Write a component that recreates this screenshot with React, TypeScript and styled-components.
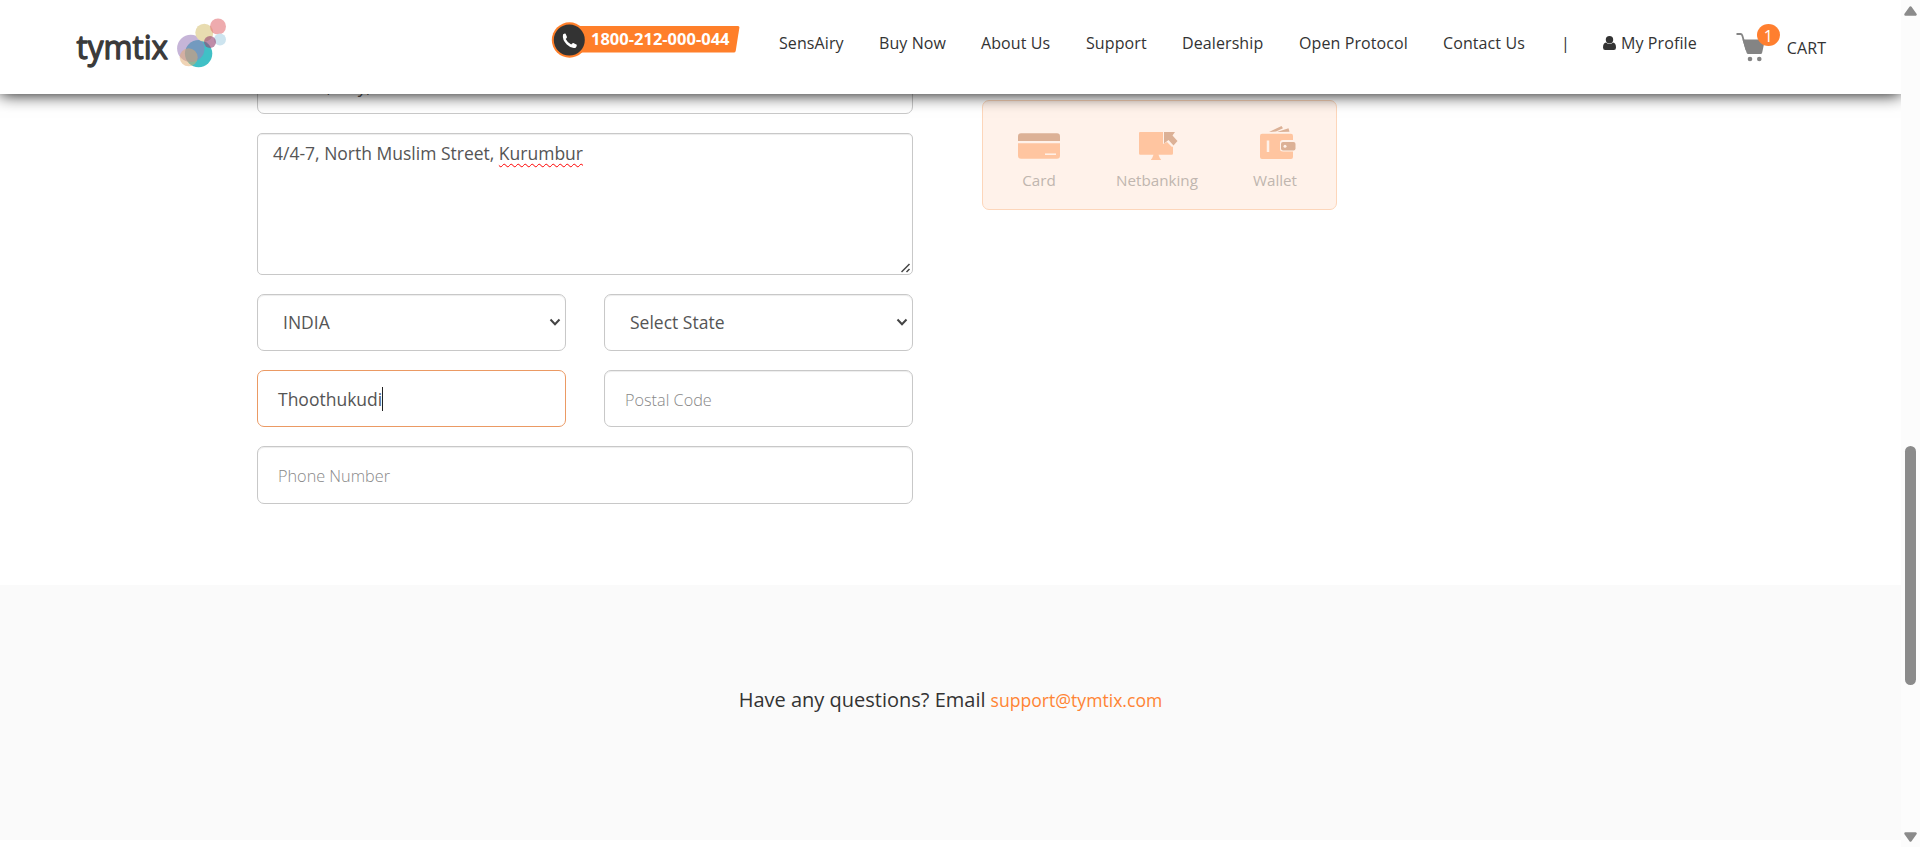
import React from "react";
import styled, { createGlobalStyle, css } from "styled-components";

const Global = createGlobalStyle`
  * { box-sizing: border-box; }
  html, body { margin: 0; padding: 0; height: 847px; overflow: hidden; background: #fff; }
  body { font-family: "Open Sans", "Noto Sans", sans-serif; color: #333; }
`;

const Frame = styled.div`
  display: flex;
  width: 1920px;
  height: 847px;
  overflow: hidden;
`;

const Page = styled.div`
  position: relative;
  width: 1901px;
  height: 847px;
  overflow: hidden;
`;

const Header = styled.header`
  position: absolute;
  inset: 0 0 auto 0;
  z-index: 2;
  height: 94px;
  padding-left: 70px;
  display: flex;
  align-items: flex-start;
  background: #fff;
  box-shadow: 0 0 16px #000;
  letter-spacing: 0.1px;
`;

const Logo = styled.svg`
  flex: none;
  width: 166px;
  height: 76px;
  margin-right: 310px;
  letter-spacing: 0;
`;

const PhoneBadge = styled.svg`
  flex: none;
  width: 200px;
  height: 76px;
  margin-right: 33px;
  letter-spacing: 0;
`;

const Nav = styled.nav`
  display: flex;
  gap: 35px;
  padding-top: 32px;
  font-size: 16px;
  line-height: 22px;
  white-space: nowrap;
`;

const NavItem = styled.a<{ $w: number }>`
  width: ${(p) => p.$w}px;
  color: #333;
`;

const Profile = styled.a`
  display: flex;
  align-items: center;
  gap: 5px;
  padding-top: 32px;
  margin-left: 38px;
  font-size: 16px;
  line-height: 22px;
  white-space: nowrap;
`;

const Cart = styled.a`
  position: relative;
  display: flex;
  margin-left: 39px;
  padding-top: 32px;
  font-size: 16px;
`;

const CartLabel = styled.span`
  margin-left: 21px;
  padding-top: 5px;
  line-height: 22px;
`;

const CartCount = styled.span`
  position: absolute;
  left: 21px;
  top: 24px;
  width: 23px;
  height: 22px;
  border-radius: 50%;
  background: #ff7f2f;
  color: #fff;
  font-size: 16px;
  line-height: 24px;
  text-align: center;
`;

const Main = styled.main`
  display: flex;
  height: 585px;
  padding: 57px 0 0 257px;
`;

const Form = styled.form`
  display: flex;
  flex-direction: column;
  gap: 19px;
  width: 656px;
  margin-right: 69px;
`;

const Row = styled.div`
  display: flex;
  gap: 38px;
`;

const Field = styled.div<{ $active?: boolean; $select?: boolean; $hint?: boolean; $tall?: boolean }>`
  flex: 1;
  display: flex;
  align-items: center;
  justify-content: space-between;
  height: ${(p) => (p.$tall ? 58 : 57)}px;
  padding: 0 ${(p) => (p.$select ? 4 : 20)}px ${(p) => (p.$select ? 1 : 0)}px ${(p) => (p.$select ? 25 : 20)}px;
  border: 1px solid ${(p) => (p.$active ? "#eb9a64" : "#c8c8c8")};
  border-radius: 7px;
  background: #fff;
  color: #555;
  font-size: 17.5px;
  white-space: nowrap;
  ${(p) => !p.$active && css`box-shadow: inset 0 1px 1px rgba(0, 0, 0, 0.075);`}
  ${(p) => p.$hint && css`
    padding-top: ${p.$tall ? 1 : 2}px;
    color: #888;
    font-size: 16.25px;
    font-weight: 300;
  `}
`;

const Typed = styled.span`
  display: flex;
  align-items: center;
`;

const Caret = styled.i`
  width: 1px;
  height: 24px;
  background: #222;
`;

const Address = styled.div`
  display: flex;
  justify-content: space-between;
  height: 142px;
  padding: 7px 1px 1px 15px;
  border: 1px solid #c8c8c8;
  border-radius: 5px;
  box-shadow: inset 0 1px 1px rgba(0, 0, 0, 0.075);
  color: #555;
  font-size: 17.5px;
  line-height: 25px;
`;

const Misspelt = styled.span`
  text-decoration: underline wavy #f00;
  text-decoration-thickness: 1px;
  text-underline-offset: 3px;
  text-decoration-skip-ink: none;
`;

const Grip = styled.svg`
  align-self: flex-end;
`;

const Payment = styled.section`
  display: grid;
  grid-template-columns: 112px 124px 112px;
  width: 355px;
  height: 110px;
  margin-top: 43px;
  border: 1px solid #fdd6ba;
  border-radius: 7px;
  background: #fff2ea;
`;

const Method = styled.div`
  display: flex;
  flex-direction: column;
  align-items: center;
  padding-top: 23px;
  color: #c0b6af;
  font-size: 15.2px;
  font-weight: 500;
  line-height: 26px;
`;

const Footer = styled.footer`
  display: flex;
  justify-content: center;
  align-items: baseline;
  gap: 5px;
  height: 255px;
  padding-top: 100px;
  background: #fafafa;
  font-size: 20px;
  line-height: 30px;
  color: #333;
`;

const Mail = styled.a`
  color: #ff8434;
  font-size: 17.6px;
`;

const Scroll = styled.aside`
  display: flex;
  flex-direction: column;
  align-items: center;
  justify-content: space-between;
  width: 19px;
  height: 847px;
  padding: 6px 0 5px;
  background: #fcfcfc;
`;

const Thumb = styled.div`
  width: 11px;
  height: 239px;
  margin-top: 283px;
  border-radius: 6px;
  background: #8b8b8b;
`;

const Chevron = () => (
  <svg width="12" height="8" viewBox="0 0 12 8">
    <path d="M1.5 1.5 6 6.2 10.5 1.5" fill="none" stroke="#444" strokeWidth="2" />
  </svg>
);

export default function App() {
  return (
    <Frame>
      <Global />
      <Page>
        <Header>
          <Logo viewBox="70 0 166 76">
            <text x="76.500" y="59" fontFamily="Open Sans" fontWeight="500" fontSize="32" textLength="91.500" lengthAdjust="spacingAndGlyphs" fill="#3a3a3a" stroke="#3a3a3a" strokeWidth="1.300" strokeLinejoin="round">tymtix</text>
            <circle cx="198.6" cy="53.6" r="13.7" fill="#40c0c6" />
            <circle cx="190.8" cy="48.4" r="13.7" fill="rgba(154,124,186,.566)" />
            <circle cx="188.7" cy="57.3" r="9" fill="rgba(225,170,107,.5)" />
            <circle cx="204.3" cy="32.7" r="9" fill="#e8dcb0" />
            <circle cx="218" cy="26.5" r="8" fill="rgba(225,110,115,.58)" />
            <circle cx="220" cy="39.4" r="6" fill="#cde4ef" />
            <circle cx="210" cy="42" r="6" fill="rgba(150,70,115,.62)" />
          </Logo>
          <PhoneBadge viewBox="546 0 200 76">
            <path d="M570 26H738Q739.600 26 739.400 27.500L735.700 51Q735.400 52.600 733.800 52.600H570Z" fill="#ff7f2a" />
            <circle cx="569.5" cy="40" r="17.700" fill="#ff7f2a" />
            <circle cx="569.3" cy="40" r="15.500" fill="#333" />
            <path d="M563 34.500Q564.500 33.300 565.600 33.700L567 37Q567 38 565.700 39Q567.500 42.800 571.200 44.400Q572.400 42.700 573.300 42.900L576.800 44.700Q577 46.400 575.700 47.700Q571.500 49 566.800 44.500Q562 39.500 563 34.500Z" fill="#fff" />
            <text x="591" y="45" fontFamily="Open Sans" fontWeight="700" fontSize="16.500" textLength="138.500" lengthAdjust="spacingAndGlyphs" fill="#fff">1800-212-000-044</text>
          </PhoneBadge>
          <Nav>
            <NavItem $w={65}>SensAiry</NavItem>
            <NavItem $w={67}>Buy Now</NavItem>
            <NavItem $w={70}>About Us</NavItem>
            <NavItem $w={61}>Support</NavItem>
            <NavItem $w={82}>Dealership</NavItem>
            <NavItem $w={109}>Open Protocol</NavItem>
            <NavItem $w={83}>Contact Us</NavItem>
            <NavItem $w={4}>|</NavItem>
          </Nav>
          <Profile>
            <svg width="13" height="14" viewBox="0 0 13 14">
              <circle cx="6.500" cy="3.800" r="3.700" fill="#333" />
              <path d="M3 6.500Q6.500 9.600 10 6.500Q13 7 13 11.500Q13 14 10.800 14H2.200Q0 14 0 11.500Q0 7 3 6.500Z" fill="#333" />
            </svg>
            My Profile
          </Profile>
          <Cart>
            <svg width="30" height="30" viewBox="0 0 30 30">
              <path d="M0.500 2H4.500Q5.800 2 6.300 3.500L10.500 18" fill="none" stroke="#848484" strokeWidth="1.800" />
              <path d="M6.500 7.500H29L26.200 20.500Q25.900 22 24.500 22H12.300Q10.900 22 10.500 20.500Z" fill="#848484" />
              <circle cx="14" cy="27" r="2.300" fill="#848484" />
              <circle cx="23.300" cy="27" r="2.300" fill="#848484" />
            </svg>
            <CartLabel>CART</CartLabel>
            <CartCount>1</CartCount>
          </Cart>
        </Header>
        <Main>
          <Form>
            <Row><Field>Street, City,</Field></Row>
            <Address>
              <span>4/4-7, North Muslim Street, <Misspelt>Kurumbur</Misspelt></span>
              <Grip width="10" height="10" viewBox="0 0 10 10">
                <path d="M0.500 9 8.500 1M5.500 9 8.500 6" stroke="#444" strokeWidth="1.500" />
              </Grip>
            </Address>
            <Row>
              <Field $select>INDIA<Chevron /></Field>
              <Field $select>Select State<Chevron /></Field>
            </Row>
            <Row>
              <Field $active><Typed>Thoothukudi<Caret /></Typed></Field>
              <Field $hint>Postal Code</Field>
            </Row>
            <Row><Field $hint $tall>Phone Number</Field></Row>
          </Form>
          <Payment>
            <Method>
              <svg width="42" height="43" viewBox="0 0 42 43">
                <path d="M0 17V12.500Q0 9.300 3 9.300H39Q42 9.300 42 12.500V17Z" fill="#dcb196" />
                <path d="M0 19.300H42V31.700Q42 34.700 39 34.700H3Q0 34.700 0 31.700Z" fill="#ffc5a0" />
                <path d="M27 30.200H38" stroke="#fff2ea" strokeWidth="1.500" />
              </svg>
              Card
            </Method>
            <Method>
              <svg width="42" height="43" viewBox="0 0 42 43">
                <path d="M4 8H27V20L31 18L36 23L37 22.500V29.500Q37 30.700 35.700 30.700H22.500L24 34.500Q25 34.500 25 36H15Q15 34.500 16 34.500L17.500 30.700H4.300Q3 30.700 3 29.500V9Q3 8 4 8Z" fill="#ffc5a0" />
                <path d="M28 8H39L36.500 11.500L41.500 17L37.500 21.500L32.500 16L28 19.500Z" fill="#dcb196" />
              </svg>
              Netbanking
            </Method>
            <Method>
              <svg width="42" height="43" viewBox="0 0 42 43">
                <g transform="translate(3)">
                  <path d="M12 8 24.500 2 26 4.200 19 7.400ZM20 8 31.500 4.300 32.500 7.800Z" fill="#dcb196" />
                  <path d="M5 9.700H34Q36 9.700 36 12V16H26Q23 16 23 19V25Q23 27.500 26 27.500H36V33Q36 35 34 35H5Q3 35 3 33V12Q3 9.700 5 9.700Z" fill="#ffc5a0" />
                  <path d="M11 16.500V28" stroke="#fff2ea" strokeWidth="2.500" />
                  <rect x="24" y="18" width="14.500" height="8.500" rx="2" fill="#dcb196" />
                  <circle cx="28" cy="22.200" r="1.500" fill="#fff2ea" />
                </g>
              </svg>
              Wallet
            </Method>
          </Payment>
        </Main>
        <Footer>
          <span>Have any questions? Email</span>
          <Mail>support@tymtix.com</Mail>
        </Footer>
      </Page>
      <Scroll>
        <svg width="13" height="10" viewBox="0 0 13 10"><path d="M6.500 1.500 11.500 8.500H1.500Z" fill="#8b8b8b" stroke="#8b8b8b" strokeWidth="2.500" strokeLinejoin="round" /></svg>
        <Thumb />
        <svg width="13" height="10" viewBox="0 0 13 10"><path d="M6.500 8.500 11.500 1.500H1.500Z" fill="#8b8b8b" stroke="#8b8b8b" strokeWidth="2.500" strokeLinejoin="round" /></svg>
      </Scroll>
    </Frame>
  );
}
